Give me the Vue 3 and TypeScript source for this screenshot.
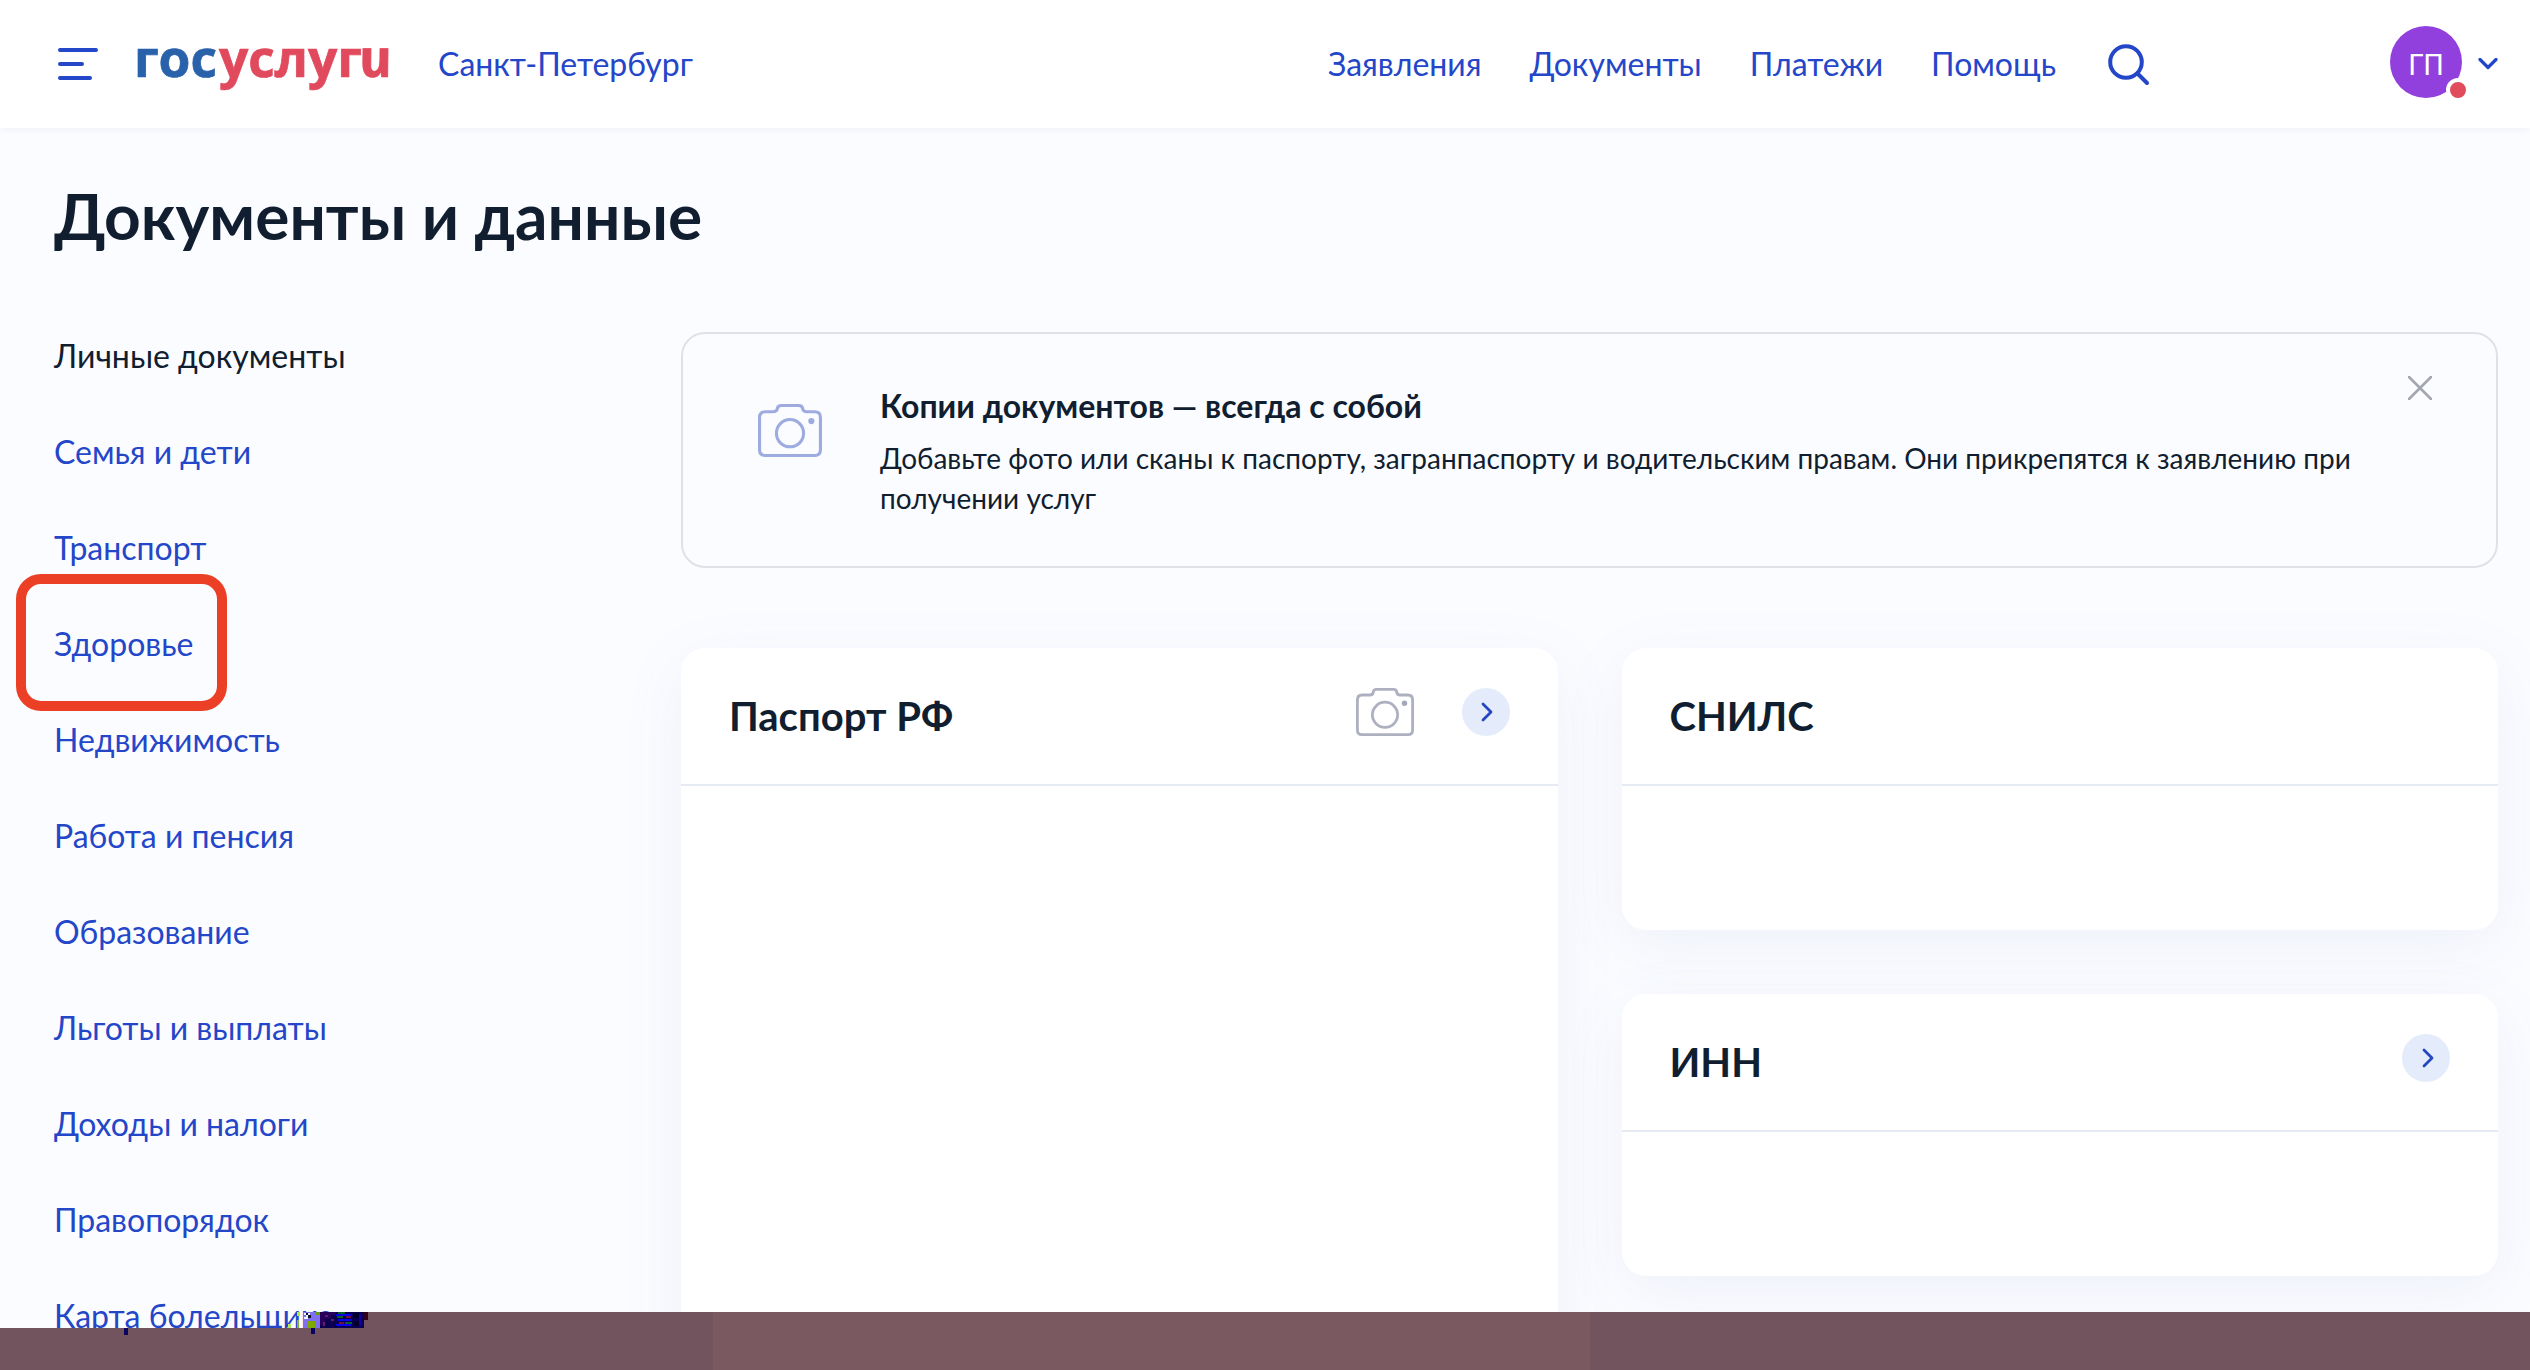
<script setup lang="ts">
interface DocCard {
  title: string
  camera?: boolean
  arrow?: boolean
}

const nav: string[] = ['Заявления', 'Документы', 'Платежи', 'Помощь']

const sections: string[] = [
  'Личные документы',
  'Семья и дети',
  'Транспорт',
  'Здоровье',
  'Недвижимость',
  'Работа и пенсия',
  'Образование',
  'Льготы и выплаты',
  'Доходы и налоги',
  'Правопорядок',
  'Карта болельщика',
]
const active = 0
const highlighted = 3

const columns: DocCard[][] = [
  [{ title: 'Паспорт РФ', camera: true, arrow: true }],
  [{ title: 'СНИЛС' }, { title: 'ИНН', arrow: true }],
]
</script>

<template>
  <div class="page">
    <header class="header">
      <svg class="burger" width="40" height="32" viewBox="0 0 40 32">
        <path d="M2 2H38M2 16H24M2 30H32" fill="none" stroke="#2446c8" stroke-width="4" stroke-linecap="round" />
      </svg>
      <svg class="logo" width="266" height="96" viewBox="-6 -12 266 96">
        <text class="logo-text" x="-4" y="49" fill="#2962ab" stroke="#2962ab" textLength="83" lengthAdjust="spacingAndGlyphs">гос</text>
        <text class="logo-text" x="81" y="49" fill="#e14a5d" stroke="#e14a5d" textLength="143" lengthAdjust="spacingAndGlyphs">услуг</text>
        <text class="logo-text last" x="0" y="0" fill="#e14a5d" stroke="#e14a5d" transform="translate(224 49) skewX(12)" textLength="33" lengthAdjust="spacingAndGlyphs">и</text>
      </svg>
      <a class="city">Санкт-Петербург</a>
      <nav class="nav">
        <a v-for="item in nav" :key="item">{{ item }}</a>
      </nav>
      <svg class="search" width="42" height="42" viewBox="0 0 42 42">
        <circle cx="18" cy="18" r="15.8" fill="none" stroke="#2446c8" stroke-width="4" />
        <path d="M29.5 29.5L39 39" stroke="#2446c8" stroke-width="4" stroke-linecap="round" />
      </svg>
      <div class="user">
        <div class="avatar">ГП<i class="dot"></i></div>
        <svg width="20" height="14" viewBox="0 0 20 14">
          <path d="M2 2.5L10 10.5L18 2.5" fill="none" stroke="#2446c8" stroke-width="3.2" stroke-linecap="round" stroke-linejoin="round" />
        </svg>
      </div>
    </header>

    <h1 class="title">Документы и данные</h1>

    <div class="body">
      <aside class="sidebar">
        <a v-for="(s, i) in sections" :key="s" :class="{ active: i === active, marked: i === highlighted }">{{ s }}</a>
      </aside>

      <main class="main">
        <section class="banner">
          <svg class="banner-cam" width="64" height="53" viewBox="0 0 66 54.500" preserveAspectRatio="none">
            <g fill="none" stroke="#9eabdf" stroke-width="3.200">
              <path d="M7.500 8H15.500Q19.500 8 20 4.500Q20.500 1.600 24 1.600H42Q45.500 1.600 46 4.500Q46.500 8 50.500 8H58.500Q64.400 8 64.400 14V47Q64.400 52.900 58.500 52.900H7.500Q1.600 52.900 1.600 47V14Q1.600 8 7.500 8Z" />
              <circle cx="33" cy="30" r="14" />
            </g>
            <circle cx="55" cy="17.500" r="3.200" fill="#9eabdf" />
          </svg>
          <div class="banner-text">
            <h2>Копии документов — всегда с собой</h2>
            <p>Добавьте фото или сканы к паспорту, загранпаспорту и водительским правам. Они прикрепятся к заявлению при получении услуг</p>
          </div>
          <svg class="close" width="24" height="24" viewBox="0 0 24 24">
            <path d="M1 1L23 23M23 1L1 23" stroke="#a3a6ae" stroke-width="2.600" stroke-linecap="round" />
          </svg>
        </section>

        <div class="columns">
          <div v-for="(col, c) in columns" :key="c" class="column">
            <article v-for="card in col" :key="card.title" class="card" :class="{ tall: c === 0 }">
              <div class="card-head">
                <h3>{{ card.title }}</h3>
                <svg v-if="card.camera" class="cam" width="58" height="48" viewBox="0 0 58 48">
                  <g fill="none" stroke="#adb1bf" stroke-width="2.800">
                    <path d="M6 7H14Q17 7 17.300 4Q17.600 1.400 20.500 1.400H37.500Q40.400 1.400 40.700 4Q41 7 44 7H52Q56.600 7 56.600 12V42Q56.600 46.600 52 46.600H6Q1.400 46.600 1.400 42V12Q1.400 7 6 7Z" />
                    <circle cx="29" cy="26.800" r="12.600" />
                  </g>
                  <circle cx="48.500" cy="15.300" r="2.700" fill="#a3a8b8" />
                </svg>
                <span v-if="card.arrow" class="arrow">
                  <svg width="12" height="20" viewBox="0 0 12 20">
                    <path d="M2 2L10 10L2 18" fill="none" stroke="#2446c0" stroke-width="2.800" stroke-linecap="round" stroke-linejoin="round" />
                  </svg>
                </span>
              </div>
            </article>
          </div>
        </div>
      </main>
    </div>

    <!-- Bottom strip with the broken block next to the last section -->
    <svg class="strip" width="2530" height="58" viewBox="0 0 2530 58" shape-rendering="crispEdges">
      <path d="M0 16H304V0H2530V58H0Z" fill="#72545f" />
      <rect x="713" y="0" width="877" height="58" fill="#7a5960" />
      <rect x="124" y="16" width="4" height="7" fill="#0a0360" />
      <rect x="311" y="16" width="4" height="6" fill="#0a0360" />
      <rect x="297" y="0" width="3" height="4" fill="#a9f03a" />
      <rect x="288" y="12" width="3" height="4" fill="#b4e85c" />
      <rect x="297" y="8" width="2" height="8" fill="#7fb040" />
      <rect x="303" y="0" width="17" height="16" fill="#8070f0" />
      <path d="M304 1h2v2h2v-2h2v4h-2v2h-4v-2h2v-2h-2z" fill="#e9f5f8" />
      <path d="M306 1h2v2h-2zM308 3h3v3h-3z" fill="#101030" />
      <rect x="308" y="9" width="7" height="7" fill="#7ea800" />
      <rect x="316" y="0" width="4" height="3" fill="#669d10" />
      <rect x="320" y="0" width="44" height="16" fill="#0b0050" />
      <path d="M320 0h16v3h-5v4h-6v6h-5z" fill="#26005a" />
      <path d="M325 3h3v2h-3zM331 7h3v2h-3zM323 10h2v4h-2z" fill="#681b60" />
      <path d="M336 2h16v2h-16zM338 7h14v2h-14zM336 12h15v2h-15z" fill="#0800e8" />
      <path d="M338 0h7v2h-7zM337 4h6v2h-6zM345 10h7v2h-7z" fill="#0a6020" />
      <path d="M346 4h5v2h-5zM339 10h5v2h-5z" fill="#70103c" />
      <path d="M353 1h6v5h-6zM354 9h5v5h-5z" fill="#02002a" />
      <path d="M359 2h2v12h-2z" fill="#1500a8" />
      <rect x="364" y="0" width="4" height="8" fill="#320018" />
      <rect x="364" y="8" width="4" height="8" fill="#72545f" />
    </svg>
  </div>
</template>

<style>
body {
  margin: 0;
}
</style>

<style scoped>
.page {
  position: relative;
  width: 2530px;
  height: 1370px;
  overflow: hidden;
  background: #fbfcff;
  color: #101e30;
  font-family: Lato, 'Open Sans', sans-serif;
  font-size: 32px;
}
.header {
  display: flex;
  align-items: center;
  box-sizing: border-box;
  height: 128px;
  padding-left: 58px;
  padding-right: 32px;
  background: #fff;
  box-shadow: 0 0 8px rgba(70, 90, 140, 0.1);
  color: #2446c8;
}
.burger,
.logo,
.search {
  flex: none;
}
.logo {
  margin-left: 34px;
}
.logo-text {
  font-family: 'Open Sans', sans-serif;
  font-weight: 700;
  font-size: 52px;
  stroke-width: 0.7px;
}
.logo-text.last {
  font-style: italic;
}
.city {
  margin-left: 40px;
}
.city,
.nav {
  margin-top: -1px;
}
.nav {
  display: flex;
  gap: 48px;
  margin-left: auto;
}
.search {
  margin-left: 52px;
  margin-top: 1px;
}
.user {
  display: flex;
  align-items: center;
  gap: 16px;
  width: 108px;
  margin-left: 240px;
}
.user svg {
  flex: none;
}
.avatar {
  position: relative;
  flex: none;
  width: 72px;
  height: 72px;
  margin-top: -4px;
  border-radius: 50%;
  background: #9240dd;
  color: #fff;
  font-size: 28px;
  line-height: 76px;
  text-align: center;
}
.dot {
  position: absolute;
  left: 56px;
  top: 52px;
  width: 16px;
  height: 16px;
  border: 4px solid #fff;
  border-radius: 50%;
  background: #e04c5c;
}
.title {
  margin: 48px 0 0 54px;
  height: 82px;
  font-size: 64px;
  line-height: 80px;
  font-weight: 700;
}
.body {
  display: flex;
  margin-top: 74px;
}
.sidebar {
  display: flex;
  flex: none;
  flex-direction: column;
  align-items: flex-start;
  gap: 48px;
  width: 681px;
  padding: 0 0 0 54px;
  box-sizing: border-box;
  color: #2446c8;
}
.sidebar a {
  height: 48px;
  line-height: 48px;
  white-space: nowrap;
}
.sidebar .active {
  color: #101e30;
}
.marked {
  position: relative;
}
.marked::before {
  content: '';
  position: absolute;
  left: -38px;
  top: -46px;
  width: 191px;
  height: 117px;
  border: 10px solid #eb4026;
  border-radius: 25px;
}
.main {
  flex: none;
  width: 1817px;
}
.banner {
  display: flex;
  align-items: flex-start;
  box-sizing: border-box;
  height: 236px;
  padding: 42px 64px 0 75px;
  border: 2px solid #dfe1e6;
  border-radius: 24px;
}
.banner-cam {
  flex: none;
  margin-top: 28px;
}
.banner-text {
  width: 1490px;
  margin-left: 58px;
}
.banner-text h2 {
  margin: 6px 0 0;
  font-size: 32px;
  line-height: 48px;
  font-weight: 700;
}
.banner-text p {
  margin: 8px 0 0;
  font-size: 28px;
  line-height: 40px;
}
.close {
  flex: none;
  margin-left: auto;
}
.columns {
  display: flex;
  gap: 64px;
  margin-top: 80px;
}
.column {
  display: flex;
  flex: 1;
  flex-direction: column;
  gap: 64px;
}
.card {
  height: 282px;
  border-radius: 24px;
  background: #fff;
  box-shadow: 0 16px 64px rgba(90, 115, 190, 0.08);
}
.card.tall {
  height: 760px;
}
.card-head {
  display: flex;
  align-items: center;
  box-sizing: border-box;
  height: 138px;
  padding: 0 48px 8px;
  border-bottom: 2px solid #e6eaf3;
}
.card-head h3 {
  margin: 8px auto 0 0;
  font-size: 40px;
  line-height: 48px;
  font-weight: 700;
}
.arrow {
  display: flex;
  align-items: center;
  justify-content: center;
  width: 48px;
  height: 48px;
  margin-left: 48px;
  border-radius: 50%;
  background: #e4ebfb;
}
.arrow svg {
  margin-left: 3px;
}
.strip {
  position: absolute;
  left: 0;
  top: 1312px;
}
</style>
